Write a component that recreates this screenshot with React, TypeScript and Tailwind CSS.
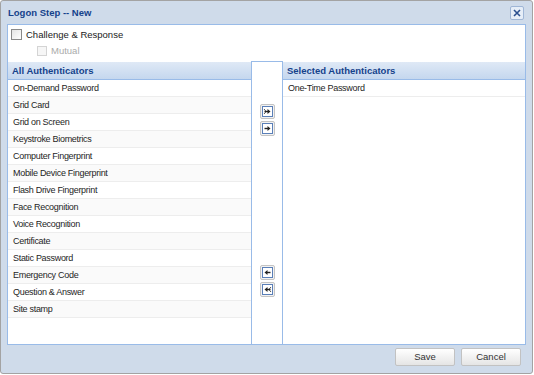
import type { ReactNode } from "react";

const available = [
  "On-Demand Password",
  "Grid Card",
  "Grid on Screen",
  "Keystroke Biometrics",
  "Computer Fingerprint",
  "Mobile Device Fingerprint",
  "Flash Drive Fingerprint",
  "Face Recognition",
  "Voice Recognition",
  "Certificate",
  "Static Password",
  "Emergency Code",
  "Question & Answer",
  "Site stamp",
];

const selected = ["One-Time Password"];

const font = "font-['Liberation_Sans',Arial,sans-serif]";

/** Small move button: grey frame, blue inner square, dark arrow(s). */
function MoveButton({ dir, all }: { dir: "right" | "left"; all?: boolean }) {
  return (
    <button
      type="button"
      className="flex h-[15px] w-[15px] items-center justify-center rounded-[2px] border border-[#c4c4c4] bg-[#f2f2f2] p-0"
    >
      <svg width="11" height="11" viewBox="0 0 11 11">
        <rect x="0.5" y="0.5" width="10" height="10" fill="#fff" stroke="#5a7fb8" />
        <g transform={dir === "left" ? "scale(-1,1) translate(-11,0)" : undefined}>
          {all && <path d="M2 3 L4.2 5.5 L2 8" fill="none" stroke="#555" strokeWidth="1" />}
          <path d="M2.5 5.5 H6.5" stroke="#222" strokeWidth="1.4" />
          <path d="M5.5 3 L8.5 5.5 L5.5 8 Z" fill="#222" />
        </g>
      </svg>
    </button>
  );
}

function ListHeader({ children }: { children: ReactNode }) {
  return (
    <div className="flex h-[18px] items-center border-b border-[#99bbe8] bg-gradient-to-b from-[#dfe9f6] to-[#c5d7ee] pl-[4px] pt-[1px] text-[9.5px] font-bold text-[#15428b]">
      {children}
    </div>
  );
}

function Row({ label, odd }: { label: string; odd: boolean }) {
  return (
    <div
      className={`flex h-[17px] items-center border-b border-[#ededed] pl-[5px] pt-[2px] text-[9px] tracking-[-0.3px] text-[#1e1e1e] ${
        odd ? "bg-[#fafafa]" : "bg-white"
      }`}
    >
      {label}
    </div>
  );
}

export default function App() {
  return (
    <div className={`h-[375px] w-[534px] bg-white ${font}`}>
      <div className="flex h-[374px] w-[533px] flex-col rounded-[3px] border border-[#a3a3a3] bg-[#cfdbea]">
        {/* title bar */}
        <div className="flex h-[23px] items-center justify-between pl-[7px] pr-[8px]">
          <span className="pt-[2px] text-[9.5px] font-bold text-[#15428b]">Logon Step -- New</span>
          <span className="flex h-[14px] w-[14px] items-center justify-center rounded-[2px] border border-[#9fb6d6] bg-[#e6eef8]">
            <svg width="8" height="8" viewBox="0 0 8 8">
              <path d="M1 1 L7 7 M7 1 L1 7" stroke="#2a4f8f" strokeWidth="1.6" />
            </svg>
          </span>
        </div>

        {/* body */}
        <div className="mx-[6px] flex h-[321px] flex-col border border-[#99bbe8] bg-white">
          <div className="h-[37px] pl-[3px] pt-[4px] leading-none">
            <label className="flex h-[11px] items-center gap-[4px] text-[9.5px] text-[#222]">
              <span className="h-[11px] w-[11px] border border-[#8a8a8a] bg-gradient-to-br from-[#e4e4e4] to-white" />
              Challenge &amp; Response
            </label>
            <label className="mt-[6px] flex h-[10px] items-center gap-[4px] pl-[26px] text-[9.5px] text-[#aaa]">
              <span className="h-[10px] w-[10px] border border-[#d4d4d4] bg-[#f6f6f6]" />
              Mutual
            </label>
          </div>

          <div className="flex flex-1">
            <div className="flex w-[243px] flex-col">
              <ListHeader>All Authenticators</ListHeader>
              {available.map((a, i) => (
                <Row key={a} label={a} odd={i % 2 === 1} />
              ))}
            </div>

            <div className="-mt-px flex w-[32px] flex-col items-center border-x border-t border-[#99bbe8] pt-[42px]">
              <div className="flex flex-col gap-[2px]">
                <MoveButton dir="right" all />
                <MoveButton dir="right" />
              </div>
              <div className="mt-[129px] flex flex-col gap-[2px]">
                <MoveButton dir="left" />
                <MoveButton dir="left" all />
              </div>
            </div>

            <div className="flex flex-1 flex-col">
              <ListHeader>Selected Authenticators</ListHeader>
              {selected.map((a, i) => (
                <Row key={a} label={a} odd={i % 2 === 1} />
              ))}
            </div>
          </div>
        </div>

        {/* footer */}
        <div className="flex justify-end gap-[6px] pr-[11px] pt-[3px]">
          {["Save", "Cancel"].map((b) => (
            <button
              key={b}
              type="button"
              className="h-[18px] w-[60px] rounded-[2px] border border-[#c2c2c2] bg-gradient-to-b from-white to-[#e5e5e5] text-[9.5px] text-[#333]"
            >
              {b}
            </button>
          ))}
        </div>
      </div>
    </div>
  );
}
